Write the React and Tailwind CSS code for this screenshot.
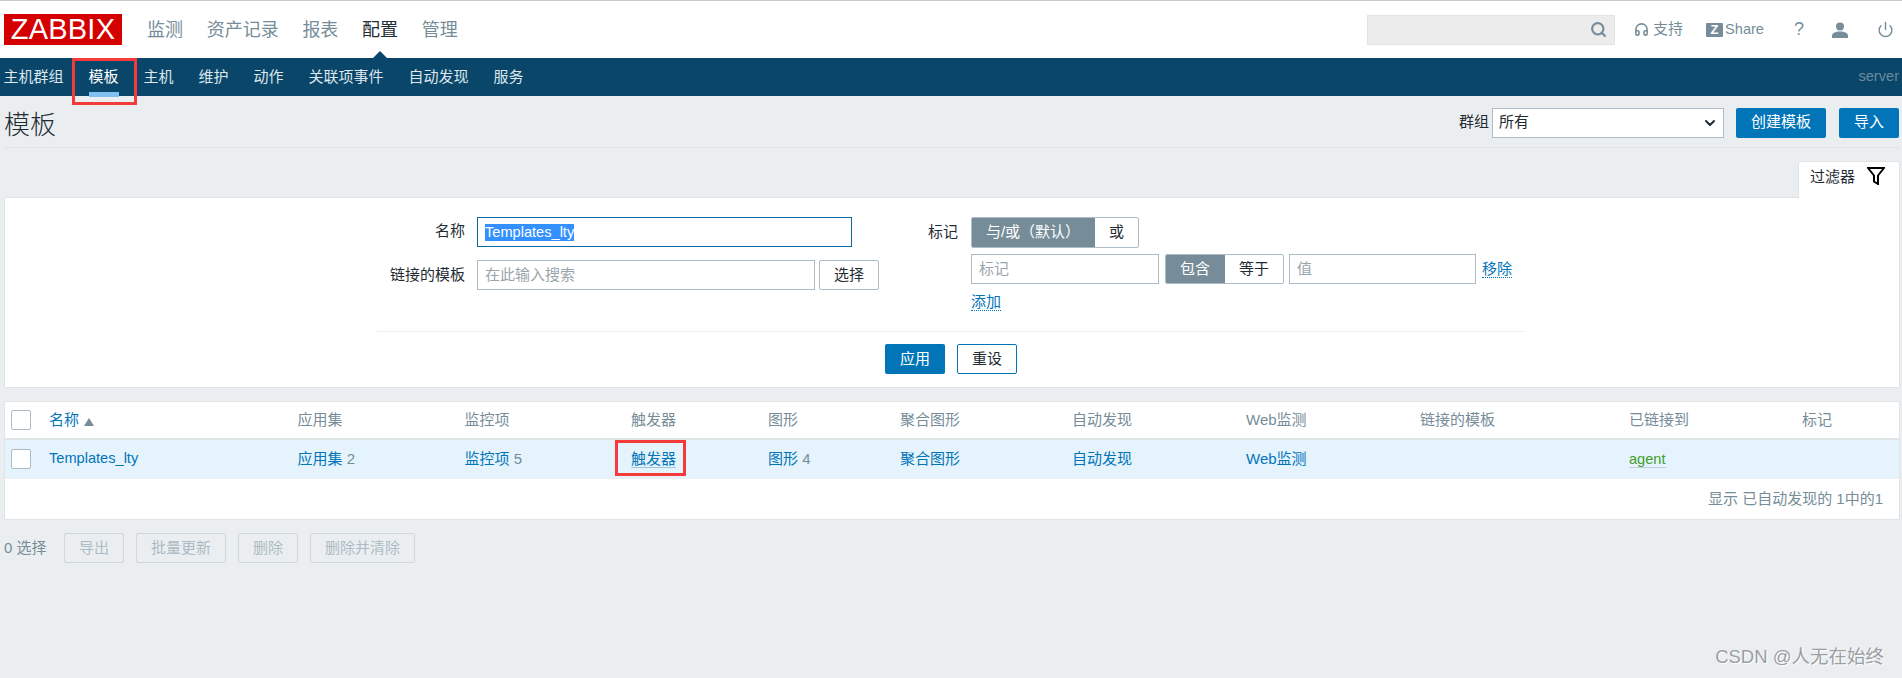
import { Search, Headphones, Power, ChevronDown } from "lucide-react";

const topNav = ["监测", "资产记录", "报表", "配置", "管理"];
const subNav = ["主机群组", "模板", "主机", "维护", "动作", "关联项事件", "自动发现", "服务"];
const columns = "grid grid-cols-[38px_248.5px_167px_166.5px_137px_132px_172px_174px_174px_209px_173px_1fr] items-center pl-[6px]";
const headers = ["应用集", "监控项", "触发器", "图形", "聚合图形", "自动发现", "Web监测", "链接的模板", "已链接到", "标记"];
const bulkActions = ["导出", "批量更新", "删除", "删除并清除"];

function Checkbox() {
  return <span className="block h-[20px] w-[20px] rounded-[2px] border border-[#acbbc4] bg-white" />;
}

function DotLink({ children }) {
  return <a className="border-b border-dotted border-[#0275b8] leading-[18px] text-[#0275b8]">{children}</a>;
}

function Segmented({ active, other, activeWidth, height }) {
  return (
    <div className={`flex overflow-hidden rounded-[2px] border border-[#acbbc4] bg-white ${height}`}>
      <span className={`-my-px -ml-px flex items-center justify-center bg-[#768d99] text-white ${activeWidth}`}>{active}</span>
      <span className="flex flex-1 items-center justify-center text-[#1f2c33]">{other}</span>
    </div>
  );
}

export default function App() {
  return (
    <div className="relative h-[678px] w-[1902px] overflow-hidden bg-[#ebeef1] font-['Liberation_Sans','Noto_Sans_CJK_SC',sans-serif] text-[15px] text-[#1f2c33]">
      {/* Top bar */}
      <header className="flex h-[58px] items-center border-t border-[#c8c8c8] bg-white pl-[4px]">
        <div className="flex h-[31px] w-[118px] items-center justify-center bg-[#d40000] text-[29px] tracking-[0.2px] text-white">ZABBIX</div>
        <nav className="ml-[25px] mt-[2px] flex gap-[23.7px] text-[18px] text-[#768d99]">
          {topNav.map((item) => (
            <span key={item} className={`relative ${item === "配置" ? "text-[#1f2c33]" : ""}`}>
              {item}
              {item === "配置" && (
                <span className="absolute bottom-[-16px] left-[9px] h-0 w-0 border-x-[9px] border-b-[9px] border-x-transparent border-b-[#0a466a]" />
              )}
            </span>
          ))}
        </nav>
        <div className="ml-auto flex items-center text-[#768d99]">
          <div className="flex h-[30px] w-[248px] items-center justify-end border border-[#e3e3e3] bg-[#ececec] pr-[7px]">
            <Search size={17} strokeWidth={3} />
          </div>
          <Headphones size={15} strokeWidth={2.5} className="ml-[19px]" />
          <span className="ml-[4px]">支持</span>
          <span className="ml-[23px] flex h-[14px] w-[17px] items-center justify-center rounded-[1px] bg-[#768d99] text-[13px] font-bold text-white">Z</span>
          <span className="ml-[2px] text-[14.6px]">Share</span>
          <span className="ml-[30px] w-[10px] text-center text-[18px]">?</span>
          <svg viewBox="0 0 16 16" className="ml-[28px] h-[16px] w-[16px] fill-[#768d99]">
            <circle cx="8" cy="4.5" r="4" />
            <path d="M0 16v-2c0-3 3-4.5 8-4.5s8 1.500 8 4.500v2z" />
          </svg>
          <Power size={17} strokeWidth={2} className="ml-[29px] mr-[8px]" />
        </div>
      </header>

      {/* Second level nav */}
      <nav className="flex h-[38px] items-center bg-[#0a466a] pl-[3.5px] pr-[3px] text-[#dde7ed]">
        <div className="flex gap-[25px]">
          {subNav.map((item) => (
            <span key={item} className={`relative ${item === "模板" ? "text-white" : ""}`}>
              {item}
              {item === "模板" && (
                <>
                  <span className="absolute bottom-[-9px] left-0 h-[5px] w-full bg-[#7ec0ee]" />
                  <span className="absolute bottom-[-17px] left-[-17px] top-[-8px] w-[65px] border-[3px] border-[#f53a3a]" />
                </>
              )}
            </span>
          ))}
        </div>
        <span className="ml-auto text-[14.6px] text-[#6b8a9c]">server</span>
      </nav>

      <main className="ml-[4px] w-[1896px]">
        {/* Title */}
        <div className="flex h-[52px] items-center justify-between border-b border-[#dfe4e7] pt-[2px]">
          <h1 className="pt-[6px] text-[26px] font-light">模板</h1>
          <div className="mr-[1px] flex items-center">
            <span>群组</span>
            <div className="ml-[3px] flex h-[30px] w-[232px] items-center justify-between border border-[#acbbc4] bg-white pl-[6px] pr-[5px]">
              <span>所有</span>
              <ChevronDown size={16} strokeWidth={3} />
            </div>
            <button className="ml-[12px] h-[30px] rounded-[2px] bg-[#0275b8] px-[15px] text-white">创建模板</button>
            <button className="ml-[13px] h-[30px] rounded-[2px] bg-[#0275b8] px-[15px] text-white">导入</button>
          </div>
        </div>

        {/* Filter */}
        <div className="flex justify-end pt-[13px]">
          <div className="relative z-10 -mb-px flex h-[37px] w-[102px] items-start rounded-t-[2px] border border-b-0 border-[#dfe4e7] bg-white pl-[11px] pt-[4px]">
            <span>过滤器</span>
            <svg viewBox="0 0 18 18" className="ml-[12px] mt-[1px] h-[18px] w-[18px] fill-none stroke-black stroke-[2]">
              <path d="M1 1h16l-6 7.500V17l-4-2.500V8.500z" />
            </svg>
          </div>
        </div>
        <section className="h-[191px] border border-[#dfe4e7] bg-white">
          <div className="flex h-[133px] pt-[19px]">
            <div className="grid w-[923px] grid-cols-[460px_1fr] content-start items-center gap-x-[12px] gap-y-[13px]">
              <label className="pb-[2px] text-right">名称</label>
              <div className="flex h-[30px] w-[375px] items-center border border-[#0b6aa5] pl-[7px]">
                <span className="bg-[#3390ff] text-[14.6px] leading-[17px] text-white">Templates_lty</span>
              </div>
              <label className="text-right">链接的模板</label>
              <div className="flex">
                <div className="flex h-[30px] w-[338px] items-center border border-[#acbbc4] pl-[7px] text-[#9aa5ab]">在此输入搜索</div>
                <button className="ml-[4px] h-[30px] w-[60px] rounded-[2px] border border-[#acbbc4]">选择</button>
              </div>
            </div>
            <div className="flex gap-[12px]">
              <label className="w-[31px] pt-[4px]">标记</label>
              <div className="flex flex-col items-start gap-[6px]">
                <div className="w-[168px]">
                  <Segmented active="与/或（默认）" other="或" activeWidth="w-[124px]" height="h-[31px]" />
                </div>
                <div className="flex items-center">
                  <div className="flex h-[30px] w-[188px] items-center border border-[#acbbc4] pl-[7px] text-[#9aa5ab]">标记</div>
                  <div className="ml-[6px] w-[119px]">
                    <Segmented active="包含" other="等于" activeWidth="w-[60px]" height="h-[30px]" />
                  </div>
                  <div className="ml-[5px] flex h-[30px] w-[187px] items-center border border-[#acbbc4] pl-[7px] text-[#9aa5ab]">值</div>
                  <span className="ml-[6px]"><DotLink>移除</DotLink></span>
                </div>
                <div className="mt-[1px]"><DotLink>添加</DotLink></div>
              </div>
            </div>
          </div>
          <div className="ml-[372px] w-[1148px] border-t border-[#ebeef0]" />
          <div className="ml-[880px] mt-[12px] flex gap-[12px]">
            <button className="h-[30px] rounded-[2px] bg-[#0275b8] px-[15px] text-white">应用</button>
            <button className="h-[30px] rounded-[2px] border border-[#0275b8] px-[14px]">重设</button>
          </div>
        </section>

        {/* Table */}
        <section className="mt-[13px] h-[119px] border border-[#dfe4e7] bg-white">
          <div className={`${columns} h-[36px] border-b-[2px] border-[#dfe4e7] text-[#768d99] box-content`}>
            <Checkbox />
            <span className="flex items-center text-[#0275b8]">
              名称
              <span className="ml-[5px] mt-[3px] h-0 w-0 border-x-[5px] border-b-[8px] border-x-transparent border-b-[#768d99]" />
            </span>
            {headers.map((h) => (
              <span key={h}>{h}</span>
            ))}
          </div>
          <div className={`${columns} h-[38px] border-b border-[#ebeef0] bg-[#e5f3fd] text-[#0275b8] box-content`}>
            <Checkbox />
            <span className="text-[14.6px]">Templates_lty</span>
            <span>应用集 <span className="text-[#768d99]">2</span></span>
            <span>监控项 <span className="text-[#768d99]">5</span></span>
            <span className="relative w-[45px]">
              <a className="border-b border-[#9dc5e2]">触发器</a>
              <span className="absolute left-[-16px] top-[-8px] h-[36px] w-[71px] border-[3px] border-[#f53a3a]" />
            </span>
            <span>图形 <span className="text-[#768d99]">4</span></span>
            <span>聚合图形</span>
            <span>自动发现</span>
            <span>Web监测</span>
            <span />
            <span><a className="border-b border-[#c3d0d8] text-[14.6px] text-[#429e2b]">agent</a></span>
            <span />
          </div>
          <div className="flex h-[40px] items-center justify-end pr-[16px] text-[#768d99]">显示 已自动发现的 1中的1</div>
        </section>

        {/* Bulk actions */}
        <div className="mt-[13px] flex h-[30px] items-center text-[#768d99]">
          <span className="w-[60px]">0 选择</span>
          <div className="flex gap-[12px]">
            {bulkActions.map((a) => (
              <button key={a} className="h-[30px] rounded-[2px] border border-[#d0d7db] bg-[#ebeef0] px-[14px] text-[#acbbc4]">{a}</button>
            ))}
          </div>
        </div>
      </main>

      <span className="absolute bottom-[7px] right-[18px] text-[18.5px] text-[#9a9fa3] [text-shadow:1px_1px_0_#ffffff]">CSDN @人无在始终</span>
    </div>
  );
}
